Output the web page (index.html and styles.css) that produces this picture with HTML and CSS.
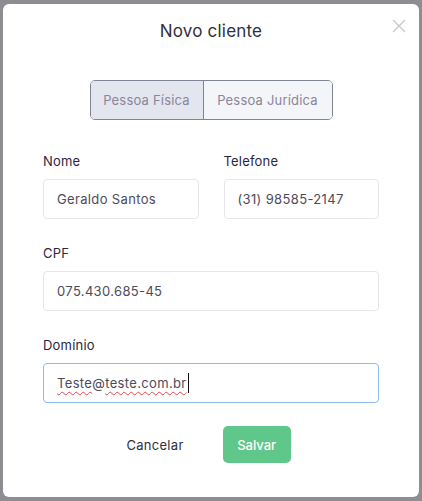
FILE: index.html
```html
<!DOCTYPE html>
<html lang="pt-BR">
<head>
  <meta charset="UTF-8">
  <title>Novo cliente</title>
  <link rel="stylesheet" href="styles.css">
</head>
<body>
<div class="overlay">
  <div class="modal">
    <div class="modal-header">
      <h2 class="modal-title">Novo cliente</h2>
      <span class="close">
        <svg width="14" height="14" viewBox="0 0 14 14"><path d="M1 1L13 13M13 1L1 13" stroke="#c9c9cc" stroke-width="1.4" fill="none"/></svg>
      </span>
    </div>

    <div class="toggle">
      <button class="toggle-btn active">Pessoa Física</button>
      <button class="toggle-btn">Pessoa Jurídica</button>
    </div>

    <div class="row">
      <div class="field">
        <label>Nome</label>
        <input type="text" value="Geraldo Santos">
      </div>
      <div class="field">
        <label>Telefone</label>
        <input type="text" value="(31) 98585-2147">
      </div>
    </div>

    <div class="field">
      <label>CPF</label>
      <input type="text" value="075.430.685-45">
    </div>

    <div class="field">
      <label>Domínio</label>
      <div class="input focused"><span class="typo">Teste</span>@<span class="typo">teste.com.br</span><span class="caret"></span></div>
    </div>

    <div class="actions">
      <button class="btn-link">Cancelar</button>
      <button class="btn-save">Salvar</button>
    </div>
  </div>
</div>
</body>
</html>
```
FILE: styles.css
```css
* {
  margin: 0;
  padding: 0;
  box-sizing: border-box;
}
body {
  background-color: #8e8e92;
  font-family: Inter, "Noto Sans", sans-serif;
}

.overlay {
  padding: 4px 3px 4px 3px;
}

.modal {
  background: #fff;
  border-radius: 6px;
  height: 493px;
  padding: 0 40px;
  display: flex;
  flex-direction: column;
}

.modal-header {
  position: relative;
  padding-top: 15px;
  height: 76px;
}
.modal-title {
  text-align: center;
  font-size: 17px;
  font-weight: 400;
  line-height: 24px;
  letter-spacing: 0.2px;
  color: #2f2f3a;
}
.close {
  position: absolute;
  right: -27px;
  top: 13px;
}

.toggle {
  display: flex;
  align-self: center;
  border: 1px solid #7f8497;
  border-radius: 5px;
  overflow: hidden;
  height: 40px;
  margin-bottom: 32px;
}
.toggle-btn {
  border: none;
  background: #f3f5f9;
  font-family: inherit;
  font-size: 13px;
  letter-spacing: 0.2px;
  color: #8a8598;
  width: 128px;
}
.toggle-btn.active {
  background: #e3e6ef;
  border-right: 1px solid #7f8497;
  width: 113px;
}

.row {
  display: flex;
  gap: 25px;
}
.row .field {
  flex: 1;
}

.field {
  display: flex;
  flex-direction: column;
  margin-bottom: 25px;
}
.field label {
  font-size: 13px;
  line-height: 18px;
  letter-spacing: 0.2px;
  color: #2d2540;
  margin-bottom: 9px;
}
.field input,
.field .input {
  height: 40px;
  border: 1px solid #e5e6ea;
  border-radius: 4px;
  padding: 0 13px;
  font-family: inherit;
  font-size: 13px;
  letter-spacing: 0.35px;
  color: #4d4b5a;
  outline: none;
  width: 100%;
}
.field .input {
  display: flex;
  align-items: center;
}
.field .input.focused {
  border-color: #8cbcf2;
}
.typo {
  text-decoration: underline wavy #e8454a;
  text-decoration-thickness: 1px;
  text-underline-offset: 3px;
}
.caret {
  display: inline-block;
  width: 1px;
  height: 20px;
  background: #111;
  margin-left: 1px;
}

.actions {
  display: flex;
  justify-content: center;
  align-items: center;
  gap: 39px;
  padding-right: 5px;
  margin-top: -2px;
}
.btn-link {
  border: none;
  background: none;
  font-family: inherit;
  font-size: 13px;
  letter-spacing: 0.3px;
  color: #2f2f3a;
}
.btn-save {
  border: none;
  background: #5fc78a;
  color: #fff;
  font-family: inherit;
  font-size: 13px;
  font-weight: 500;
  border-radius: 5px;
  width: 68px;
  height: 37px;
}
```
